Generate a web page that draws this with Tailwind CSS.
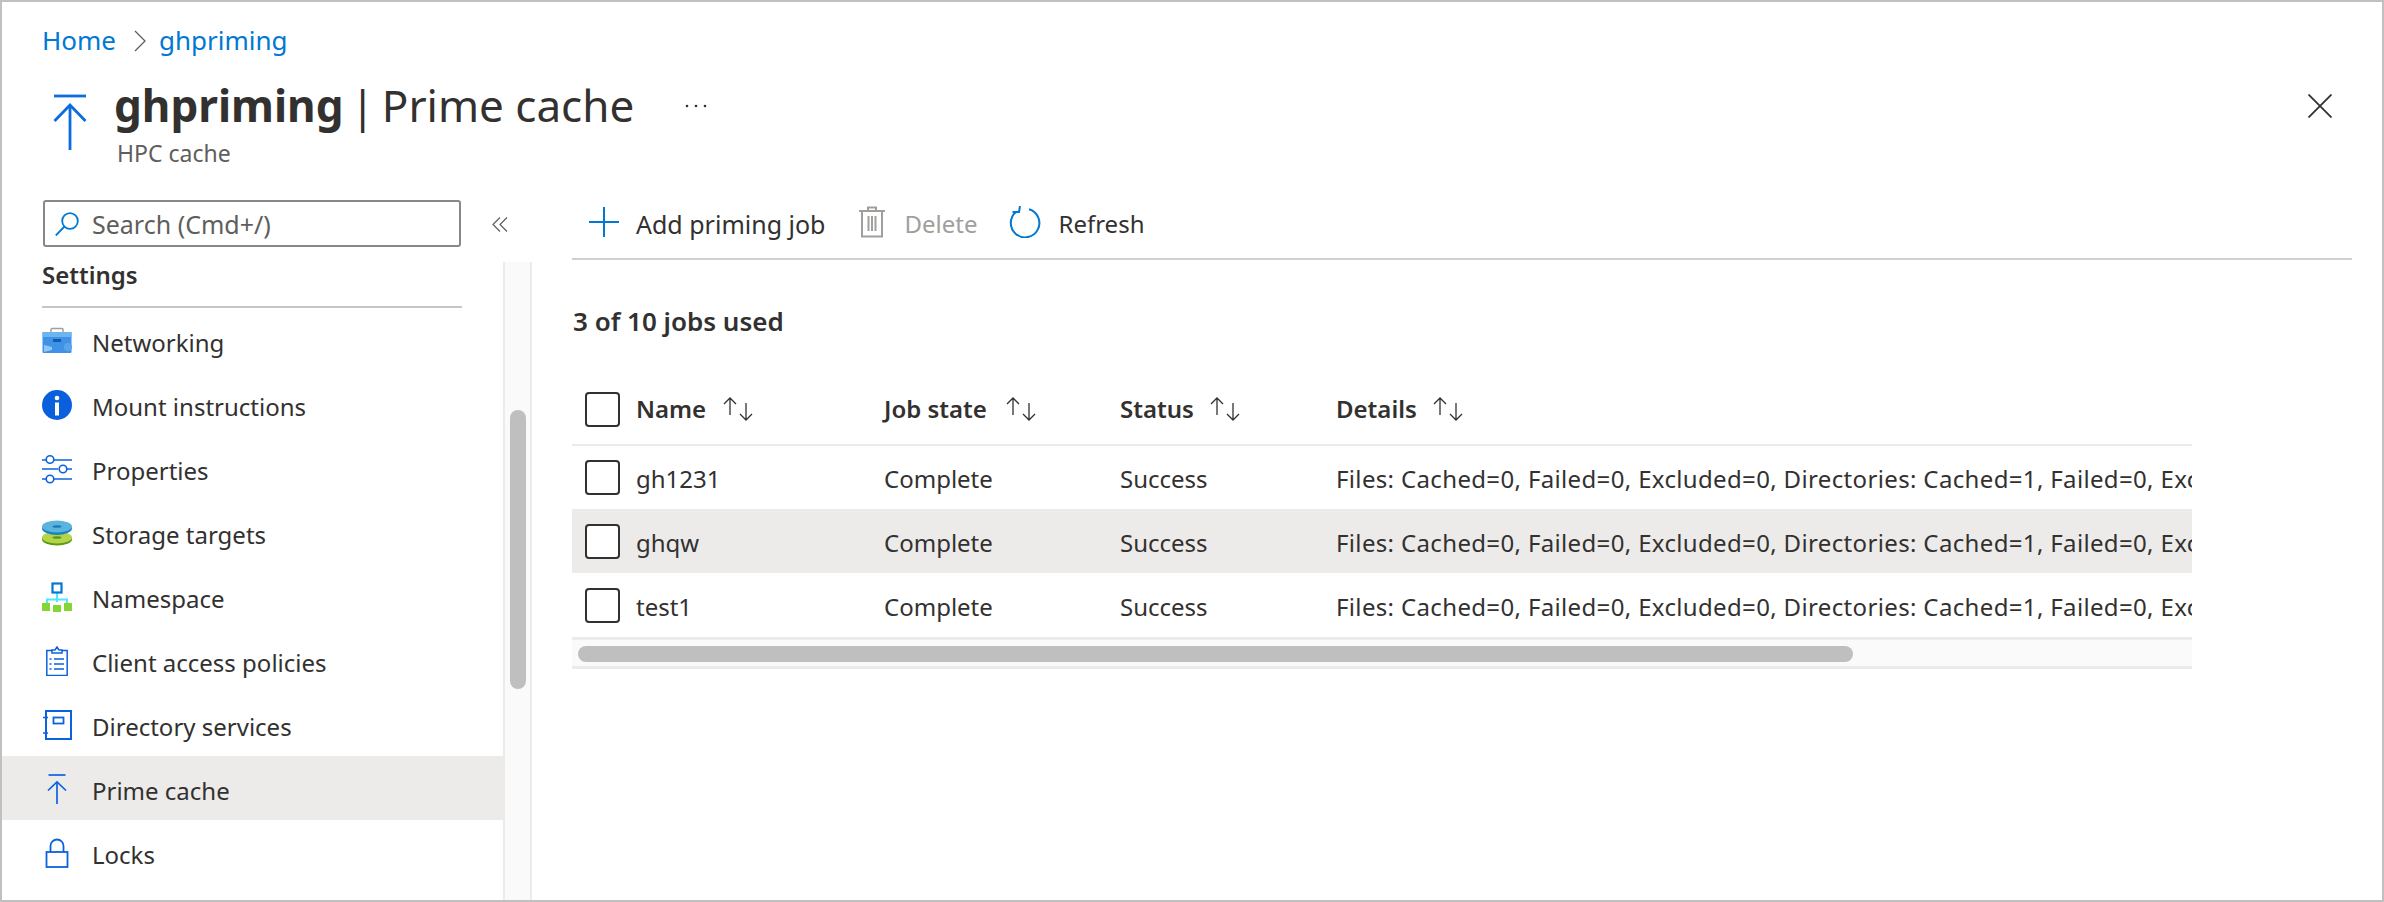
<!DOCTYPE html>
<html><head><script src="https://cdn.jsdelivr.net/npm/@tailwindcss/browser@4"></script></head>
<body class="bg-white">
<div class="w-[2384px] h-[902px] overflow-hidden box-border border-2 border-[#c0c0c0] bg-white text-[#323130] font-['Noto_Sans','Open_Sans',sans-serif] flex flex-col relative">
  <div class="h-[66px] shrink-0 pl-[40px] pt-[20px] flex items-start text-[26px] leading-[36px] text-[#0078d4]">
    <span>Home</span>
    <svg class="w-[12px] h-[22px] ml-[18px] mr-[13px] mt-[8px]" viewBox="0 0 12 22" fill="none" stroke="#605e5c" stroke-width="1.3"><path d="M1 1l10 10L1 21"/></svg>
    <span>ghpriming</span>
  </div>
  <div class="h-[132px] shrink-0 flex items-start pl-[51px] relative">
    <svg class="w-[34px] h-[56px] mt-[26px] shrink-0" viewBox="0 0 34 56" fill="none" stroke="#0b6ce0" stroke-width="2.8"><path d="M1 2h32"/><path d="M17 56V11"/><path d="M1.5 27L17 11l15.500 16"/></svg>
    <div class="ml-[27px] mt-[7px]">
      <div class="text-[44px] leading-[60px] whitespace-nowrap flex"><span class="font-bold">ghpriming</span><span class="ml-[7px]">|</span><span class="ml-[7px]">Prime cache</span></div>
      <div class="text-[23px] leading-[30px] mt-[3px] text-[#605e5c] pl-[3px]">HPC cache</div>
    </div>
    <svg class="ml-[51px] mt-[36px] w-[22px] h-[4px] shrink-0" viewBox="0 0 22 4" fill="#323130"><circle cx="2" cy="2" r="1.300"/><circle cx="11" cy="2" r="1.300"/><circle cx="20" cy="2" r="1.300"/></svg>
    <svg class="absolute left-[2306px] top-[26px] w-[24px] h-[24px]" viewBox="0 0 24 24" stroke="#323130" stroke-width="1.800" fill="none"><path d="M.5.500l23 23M23.500.500l-23 23"/></svg>
  </div>
  <div class="flex flex-1 min-h-0">
    <aside class="w-[530px] shrink-0 flex flex-col">
      <div class="h-[62px] shrink-0 pl-[41px] flex items-start">
        <div class="w-[418px] h-[47px] box-border border-2 border-[#8a8886] rounded-[3px] flex items-center pl-[10px] text-[25px] text-[#605e5c]">
          <svg class="w-[24px] h-[24px] shrink-0" viewBox="0 0 24 24" fill="none" stroke="#0078d4" stroke-width="1.800"><circle cx="15" cy="9" r="7.800"/><path d="M9.500 14.500L.8 23.500"/></svg>
          <span class="ml-[13px] pt-[2px] whitespace-nowrap">Search (Cmd+/)</span>
        </div>
        <svg class="w-[16px] h-[15px] ml-[31px] mt-[17px] shrink-0" viewBox="0 0 16 15" fill="none" stroke="#605e5c" stroke-width="1.200"><path d="M8 .5L1 7.500l7 7M15 .5L8 7.500l7 7"/></svg>
      </div>
      <div class="flex flex-1 min-h-0">
        <div class="w-[501px] shrink-0 text-[24px] leading-[34px]">
          <div class="h-[46px] ml-[40px] mr-[41px] box-border border-b-2 border-[#c8c6c4] font-semibold text-[24px] flex items-center pb-[18px]"><span>Settings</span></div>
          <div class="h-[64px] flex items-center pl-[40px] pt-[2px] gap-[20px]">
            <svg class="w-[30px] h-[30px] shrink-0" viewBox="0 0 30 30"><path d="M9 7V3.500a1 1 0 0 1 1-1h10a1 1 0 0 1 1 1V7" fill="none" stroke="#a0a0a0" stroke-width="1.500"/><rect x="0.500" y="6" width="29" height="21" rx="1" fill="#3f92e8"/><rect x="0.500" y="6" width="29" height="5" fill="#6db5ee"/><rect x="11" y="13" width="8" height="3" fill="#0f5ca8"/><path d="M2 19l8 2v3l-8 2z" fill="#90c6f2"/><circle cx="26" cy="21" r="4" fill="#5aa5ea"/></svg>
            <span class="pt-[4px]">Networking</span>
          </div>
          <div class="h-[64px] flex items-center pl-[40px] pt-[2px] gap-[20px]">
            <svg class="w-[30px] h-[30px] shrink-0" viewBox="0 0 30 30"><circle cx="15" cy="15" r="15" fill="#0a5fdc"/><circle cx="15" cy="8" r="2.300" fill="#fff"/><rect x="13" y="12.500" width="4" height="13" fill="#fff"/></svg>
            <span class="pt-[4px]">Mount instructions</span>
          </div>
          <div class="h-[64px] flex items-center pl-[40px] pt-[2px] gap-[20px]">
            <svg class="w-[30px] h-[30px] shrink-0" viewBox="0 0 30 30" fill="none" stroke="#0b62e0" stroke-width="1.600"><path d="M0 6h4M12 6h18M0 15h16M24 15h6M0 25h4M12 25h18"/><circle cx="8" cy="5.500" r="3.800" fill="#fff"/><circle cx="21" cy="15" r="3.800" fill="#fff"/><circle cx="8" cy="25" r="3.800" fill="#fff"/></svg>
            <span class="pt-[4px]">Properties</span>
          </div>
          <div class="h-[64px] flex items-center pl-[40px] pt-[2px] gap-[20px]">
            <svg class="w-[30px] h-[30px] shrink-0" viewBox="0 0 30 30"><ellipse cx="15" cy="21.500" rx="15" ry="6" fill="#5c9a0f"/><ellipse cx="15" cy="19.500" rx="15" ry="6" fill="#b4d44a"/><ellipse cx="15" cy="19.500" rx="4.500" ry="1.300" fill="#5c9a0f"/><ellipse cx="15" cy="10.500" rx="15" ry="6.500" fill="#1d82c4"/><ellipse cx="15" cy="8.500" rx="15" ry="6" fill="#5bb4dc"/><ellipse cx="15" cy="8.500" rx="4.500" ry="1.300" fill="#1d7ab8"/></svg>
            <span class="pt-[4px]">Storage targets</span>
          </div>
          <div class="h-[64px] flex items-center pl-[40px] pt-[2px] gap-[20px]">
            <svg class="w-[30px] h-[30px] shrink-0" viewBox="0 0 30 30"><path d="M15 10v10M5 22v-4.500h20V22" fill="none" stroke="#50e6ff" stroke-width="2"/><rect x="10.500" y="1.500" width="9" height="9" fill="#fff" stroke="#0078d4" stroke-width="2.200"/><rect x="0" y="21" width="8" height="8" fill="#86d633"/><rect x="22" y="21" width="8" height="8" fill="#86d633"/><rect x="11" y="23" width="8" height="7.500" fill="#86d633"/></svg>
            <span class="pt-[4px]">Namespace</span>
          </div>
          <div class="h-[64px] flex items-center pl-[40px] pt-[2px] gap-[20px]">
            <svg class="w-[30px] h-[30px] shrink-0" viewBox="0 0 30 30" fill="none" stroke="#0b62e0" stroke-width="1.500"><path d="M10 4.500H4.800v25h20.400v-25H20"/><path d="M10 7V4h3l2-3 2 3h3v3z" fill="#fff"/><path d="M7.500 13h2M12 13h10M7.500 18h2M12 18h10M7.500 23h2M12 23h10"/></svg>
            <span class="pt-[4px]">Client access policies</span>
          </div>
          <div class="h-[64px] flex items-center pl-[40px] pt-[2px] gap-[20px]">
            <svg class="w-[30px] h-[30px] shrink-0" viewBox="0 0 30 30" fill="none" stroke="#0b62e0" stroke-width="2"><rect x="4" y="1" width="25" height="28"/><rect x="11.500" y="7.500" width="10" height="6" stroke-width="1.800"/><path d="M1 7.500h5M1 23h5" stroke-width="1.600"/></svg>
            <span class="pt-[4px]">Directory services</span>
          </div>
          <div class="h-[64px] flex items-center pl-[40px] pt-[2px] gap-[20px] bg-[#edebe9]">
            <svg class="w-[30px] h-[30px] shrink-0" viewBox="0 0 30 30" fill="none" stroke="#0b62e0" stroke-width="1.700"><path d="M6.500 1h17"/><path d="M15 30V8"/><path d="M6 16.500L15 8l9 8.500"/></svg>
            <span class="pt-[4px]">Prime cache</span>
          </div>
          <div class="h-[64px] flex items-center pl-[40px] pt-[2px] gap-[20px]">
            <svg class="w-[30px] h-[30px] shrink-0" viewBox="0 0 30 30" fill="none" stroke="#0b62e0" stroke-width="1.800"><rect x="4.500" y="14" width="21" height="15"/><path d="M8.500 14V8a6.500 6.500 0 0 1 13 0v6"/></svg>
            <span class="pt-[4px]">Locks</span>
          </div>
        </div>
        <div class="w-[29px] shrink-0 box-border border-x-2 border-[#edebe9] bg-[#fafafa] pl-[5px] pt-[148px]">
          <div class="w-[16px] h-[279px] bg-[#bfbfbf] rounded-[8px]"></div>
        </div>
      </div>
    </aside>
    <main class="flex-1 min-w-0 pl-[40px] pr-[30px] flex flex-col">
      <div class="h-[60px] shrink-0 box-border border-b-2 border-[#d2d0ce] flex items-start text-[24px] leading-[34px]">
        <svg class="w-[30px] h-[30px] ml-[17px] mt-[7px] shrink-0" viewBox="0 0 30 30" fill="none" stroke="#0078d4" stroke-width="2"><path d="M15 0v30M0 15h30"/></svg>
        <span class="ml-[17px] mt-[7px] text-[25px] whitespace-nowrap">Add priming job</span>
        <svg class="w-[26px] h-[32px] ml-[34px] mt-[6px] shrink-0" viewBox="0 0 26 32" fill="none" stroke="#a19f9d" stroke-width="2"><path d="M0 5h26M9 5V1.500h8V5M3 5v25.500h20V5M9.500 10v15M13 10v15M16.500 10v15"/></svg>
        <span class="ml-[19px] mt-[7px] text-[#a19f9d] whitespace-nowrap">Delete</span>
        <svg class="w-[32px] h-[32px] ml-[32px] mt-[6px] shrink-0" viewBox="0 0 32 32" fill="none" stroke="#0078d4" stroke-width="2"><path d="M20 3.300A14.300 14.300 0 1 1 7 6"/><path d="M3.500 6h6.500l1-6"/></svg>
        <span class="ml-[17px] mt-[7px] whitespace-nowrap">Refresh</span>
      </div>
      <div class="h-[114px] shrink-0 flex items-center pl-[1px] pt-[9px] text-[26px] font-semibold"><span>3 of 10 jobs used</span></div>
      <div class="w-[1620px] overflow-hidden text-[24px] leading-[32px]">
        <div class="h-[72px] box-border border-b-2 border-[#edebe9] grid grid-cols-[64px_248px_236px_216px_1fr] items-center font-semibold">
          <div class="pl-[13px]"><div class="w-[35px] h-[35px] box-border border-2 border-[#323130] rounded-[4px]"></div></div>
          <div class="flex items-center"><span>Name</span><svg class="w-[32px] h-[24px] ml-[16px] shrink-0" viewBox="0 0 32 24" fill="none" stroke="#323130" stroke-width="1.300"><path d="M8 18V1M2 7l6-6 6 6M24 6v17M18 17l6 6 6-6"/></svg></div>
          <div class="flex items-center"><span>Job state</span><svg class="w-[32px] h-[24px] ml-[18px] shrink-0" viewBox="0 0 32 24" fill="none" stroke="#323130" stroke-width="1.300"><path d="M8 18V1M2 7l6-6 6 6M24 6v17M18 17l6 6 6-6"/></svg></div>
          <div class="flex items-center"><span>Status</span><svg class="w-[32px] h-[24px] ml-[15px] shrink-0" viewBox="0 0 32 24" fill="none" stroke="#323130" stroke-width="1.300"><path d="M8 18V1M2 7l6-6 6 6M24 6v17M18 17l6 6 6-6"/></svg></div>
          <div class="flex items-center"><span>Details</span><svg class="w-[32px] h-[24px] ml-[15px] shrink-0" viewBox="0 0 32 24" fill="none" stroke="#323130" stroke-width="1.300"><path d="M8 18V1M2 7l6-6 6 6M24 6v17M18 17l6 6 6-6"/></svg></div>
        </div>
        <div class="h-[63px] grid grid-cols-[64px_248px_236px_216px_1fr] items-center">
          <div class="pl-[13px]"><div class="w-[35px] h-[35px] box-border border-2 border-[#323130] rounded-[4px] bg-white"></div></div>
          <div class="pt-[3px]">gh1231</div><div class="pt-[3px]">Complete</div><div class="pt-[3px]">Success</div>
          <div class="pt-[3px] whitespace-nowrap overflow-hidden tracking-[0.35px]">Files: Cached=0, Failed=0, Excluded=0, Directories: Cached=1, Failed=0, Excluded=0</div>
        </div>
        <div class="h-[64px] grid grid-cols-[64px_248px_236px_216px_1fr] items-center bg-[#edebe9]">
          <div class="pl-[13px]"><div class="w-[35px] h-[35px] box-border border-2 border-[#323130] rounded-[4px] bg-white"></div></div>
          <div class="pt-[3px]">ghqw</div><div class="pt-[3px]">Complete</div><div class="pt-[3px]">Success</div>
          <div class="pt-[3px] whitespace-nowrap overflow-hidden tracking-[0.35px]">Files: Cached=0, Failed=0, Excluded=0, Directories: Cached=1, Failed=0, Excluded=0</div>
        </div>
        <div class="h-[64px] grid grid-cols-[64px_248px_236px_216px_1fr] items-center">
          <div class="pl-[13px]"><div class="w-[35px] h-[35px] box-border border-2 border-[#323130] rounded-[4px] bg-white"></div></div>
          <div class="pt-[3px]">test1</div><div class="pt-[3px]">Complete</div><div class="pt-[3px]">Success</div>
          <div class="pt-[3px] whitespace-nowrap overflow-hidden tracking-[0.35px]">Files: Cached=0, Failed=0, Excluded=0, Directories: Cached=1, Failed=0, Excluded=0</div>
        </div>
        <div class="h-[32px] box-border border-y-[3px] border-[#edebe9] bg-[#fafafa] pl-[6px] pt-[6px]">
          <div class="w-[1275px] h-[16px] bg-[#bfbfbf] rounded-[8px]"></div>
        </div>
      </div>
    </main>
  </div>
</div>
</body></html>
